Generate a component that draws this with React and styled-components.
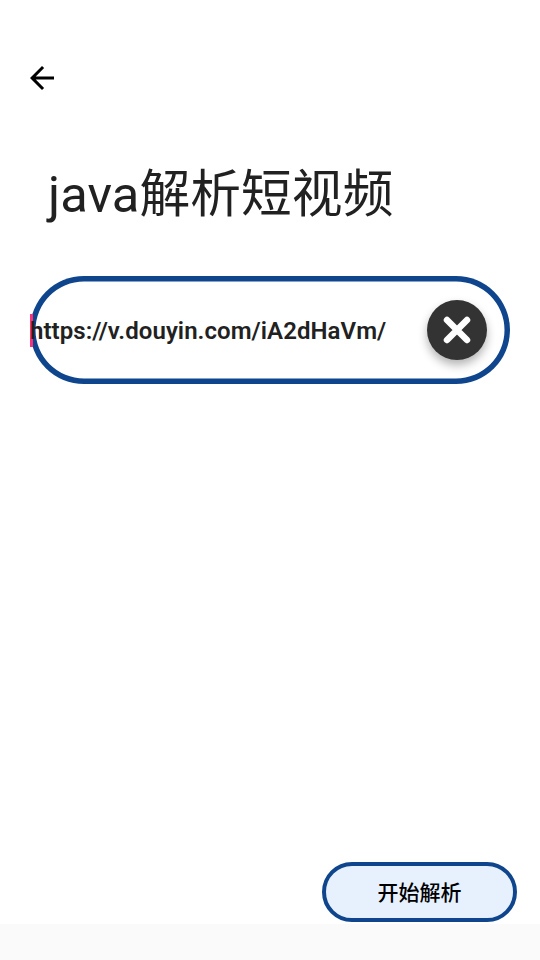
import React from "react";
import styled, { createGlobalStyle } from "styled-components";

const GlobalStyle = createGlobalStyle`
  html, body {
    margin: 0;
    padding: 0;
    background: #fff;
  }
  * {
    box-sizing: border-box;
  }
`;

const Page = styled.div`
  width: 540px;
  height: 960px;
  display: flex;
  flex-direction: column;
  background: #fff;
  font-family: Roboto, "Noto Sans CJK SC", sans-serif;
`;

const Content = styled.div`
  flex: 1;
  display: flex;
  flex-direction: column;
  padding: 60px 30px 0;
`;

const BackButton = styled.button`
  width: 36px;
  height: 36px;
  margin-left: -6px;
  padding: 0;
  border: none;
  background: none;
  color: #000;
  cursor: pointer;

  svg {
    display: block;
  }
`;

const Title = styled.h1`
  margin: 63px 0 0 18px;
  font-size: 50.7px;
  line-height: 72px;
  font-weight: 400;
  letter-spacing: 0.1px;
  color: #212121;
  white-space: nowrap;
`;

const Field = styled.div`
  width: 480px;
  height: 108px;
  margin-top: 45px;
  display: flex;
  align-items: center;
  padding-right: 23px;
  border-radius: 54px;
  box-shadow: inset 0 0 0 5.5px #0f458c;
`;

const Caret = styled.span`
  flex: none;
  width: 3px;
  height: 33px;
  margin-right: -4px;
  background: #f8327a;
`;

const FieldText = styled.span`
  flex: 1;
  padding: 2px 0 0 1px;
  font-size: 24px;
  font-weight: 600;
  letter-spacing: 0.06px;
  color: #212121;
  white-space: nowrap;
`;

const ClearButton = styled.button`
  flex: none;
  width: 60px;
  height: 60px;
  padding: 0;
  display: flex;
  align-items: center;
  justify-content: center;
  border: none;
  border-radius: 50%;
  background: #333;
  box-shadow: 0 5px 10px rgba(0, 0, 0, 0.3);
  cursor: pointer;
`;

const Actions = styled.div`
  display: flex;
  justify-content: flex-end;
  padding: 0 23px 2px 0;
`;

const StartButton = styled.button`
  width: 195px;
  height: 60px;
  padding: 0 0 2px;
  border: 4px solid #0f458c;
  border-radius: 30px;
  background: #e7f1fe;
  color: #000;
  font-family: inherit;
  font-size: 21px;
  font-weight: 500;
  cursor: pointer;
`;

const BottomBar = styled.div`
  height: 36px;
  background: #fafafa;
`;

const BackIcon = () => (
  <svg width="36" height="36" viewBox="0 0 24 24" fill="currentColor">
    <path d="M20 11H7.83l5.59-5.59L12 4l-8 8 8 8 1.41-1.41L7.83 13H20v-2z" />
  </svg>
);

const CloseIcon = () => (
  <svg width="28" height="28" viewBox="0 0 28 28" fill="none">
    <path d="M4 4l20 20M24 4L4 24" stroke="#fff" strokeWidth="6.5" strokeLinecap="round" />
  </svg>
);

const App = () => {
  return (
    <Page>
      <GlobalStyle />
      <Content>
        <BackButton aria-label="back">
          <BackIcon />
        </BackButton>
        <Title>java解析短视频</Title>
        <Field>
          <Caret />
          <FieldText>https://v.douyin.com/iA2dHaVm/</FieldText>
          <ClearButton aria-label="clear">
            <CloseIcon />
          </ClearButton>
        </Field>
      </Content>
      <Actions>
        <StartButton>开始解析</StartButton>
      </Actions>
      <BottomBar />
    </Page>
  );
};

export default App;
